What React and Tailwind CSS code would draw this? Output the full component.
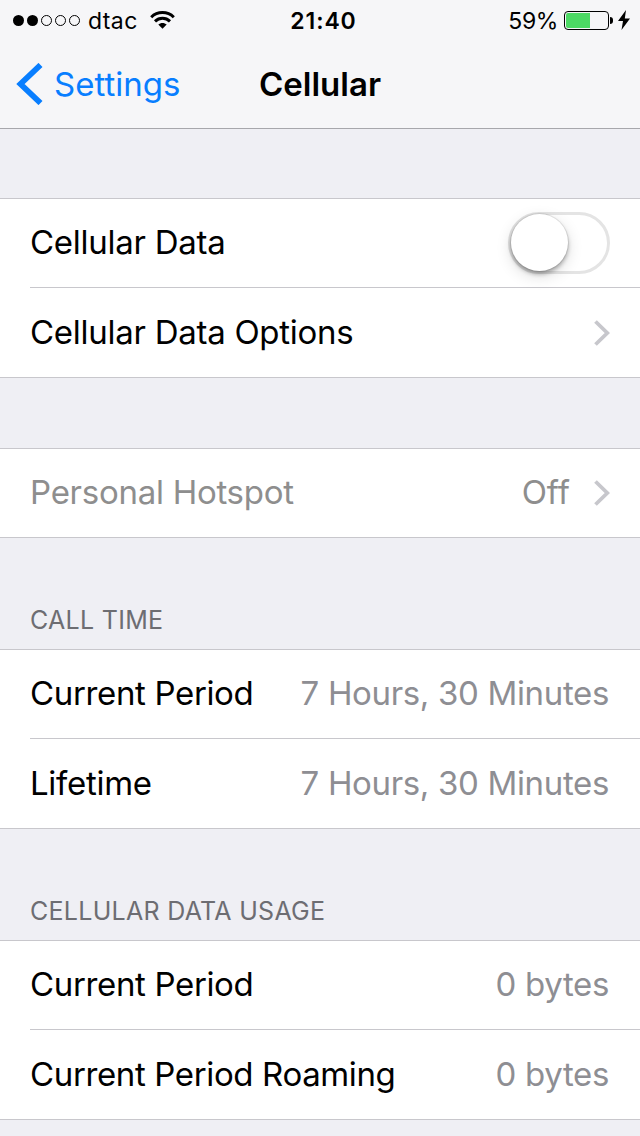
import React, { useState } from "react";

const groups = [
    {
        rows: [
            { label: 'Cellular Data', labelStyle: 'tracking-[-0.27px]', type: 'switch' },
            { label: 'Cellular Data Options', labelStyle: 'tracking-[-0.27px]', type: 'link' },
        ],
    },
    {
        rows: [
            { label: 'Personal Hotspot', labelStyle: 'tracking-[-0.27px]', value: 'Off', type: 'link', disabled: true },
        ],
    },
    {
        title: 'CALL TIME',
        rows: [
            { label: 'Current Period', labelStyle: 'tracking-[-0.35px]', value: '7 Hours, 30 Minutes' },
            { label: 'Lifetime', labelStyle: 'tracking-[-0.3px]', value: '7 Hours, 30 Minutes' },
        ],
    },
    {
        title: 'CELLULAR DATA USAGE',
        rows: [
            { label: 'Current Period', labelStyle: 'tracking-[-0.35px]', value: '0 bytes' },
            { label: 'Current Period Roaming', labelStyle: 'tracking-[-0.37px]', value: '0 bytes' },
        ],
    },
]

function StatusBar() {
    return (
        <div className="grid h-10 grid-cols-3 items-center pl-[13px] pr-2.5 pt-px text-[23px] leading-none">
            <div className="flex items-center">
                <div className="flex gap-[3px]">
                    {[1, 2, 3, 4, 5].map((dot) => (
                        <span key={dot} className={dot <= 2 ? "size-[11px] rounded-full bg-black" : "size-[11px] rounded-full border border-black"} />
                    ))}
                </div>
                <span className="ml-2 pt-0.5 tracking-[0.4px]">dtac</span>
                <svg className="mb-px ml-3 h-[18px] w-[25px]" viewBox="0 0 25 18" fill="none" stroke="black" strokeWidth="3">
                    <path d="M1.2 6.2C7.5 0 17.5 0 23.8 6.2" />
                    <path d="M5 10.3C9.3 6.2 15.7 6.2 20 10.3" />
                    <path d="M12.5 17.8L8.3 13.6C10.6 11.4 14.4 11.4 16.7 13.6Z" fill="black" stroke="none" />
                </svg>
            </div>
            <span className="pl-1 pt-0.5 text-center font-semibold tracking-[0.9px]">21:40</span>
            <div className="flex items-center justify-end">
                <span className="mr-1.5 pt-0.5 tracking-[-0.4px]">59%</span>
                <div className="h-[19px] w-[45px] rounded-[4px] border border-black p-px">
                    <div className="h-full w-6 rounded-l-[2px] bg-[#4cd964]" />
                </div>
                <div className="ml-px h-[7px] w-[3px] rounded-r-full bg-black" />
                <svg className="mb-0.5 ml-[5px] h-5 w-3" viewBox="0 0 12 20">
                    <path d="M8 0L0 11H5L3.5 20L12 8.5H6.8Z" fill="black" />
                </svg>
            </div>
        </div>
    )
}

function NavBar() {
    return (
        <div className="grid h-[88px] grid-cols-3 items-center px-4">
            <button className="flex items-center text-[#087eff]">
                <svg className="h-[42px] w-[27px]" viewBox="0 0 27 42" fill="none" stroke="currentColor" strokeWidth="5.8">
                    <path d="M24.5 2L4.5 21L24.5 40" />
                </svg>
                <span className="ml-[11px] text-[33px] leading-none">Settings</span>
            </button>
            <h1 className="text-center text-[33px] font-semibold leading-none">Cellular</h1>
        </div>
    )
}

function Switch() {
    const [on, setOn] = useState(false)
    return (
        <button
            role="switch"
            aria-checked={on}
            aria-label="Cellular Data"
            onClick={() => setOn(!on)}
            className={on
                ? "flex h-[62px] w-[102px] justify-end rounded-full border-3 border-[#4cd964] bg-[#4cd964]"
                : "flex h-[62px] w-[102px] rounded-full border-3 border-[#e4e4e4] bg-white"}
        >
            <span className="-mt-px size-[57px] rounded-full bg-white shadow-[0_0_0_1px_rgba(0,0,0,0.08),0_3px_4px_rgba(0,0,0,0.3),0_5px_16px_rgba(0,0,0,0.14)]" />
        </button>
    )
}

function Chevron() {
    return (
        <svg className="ml-6 h-[26px] w-4" viewBox="0 0 16 26" fill="none" stroke="#c7c7cc" strokeWidth="3.8">
            <path d="M1.5 1.5L13.3 13L1.5 24.5" />
        </svg>
    )
}

function Row({ row, divider, second }) {
    const textPad = second ? '' : 'pb-0.5'
    return (
        <div className={divider ? "flex h-[89px] items-center border-b border-[#c8c7cc] pr-[30px]" : "flex h-full items-center pr-[30px]"}>
            <span className={`flex-1 whitespace-nowrap text-[33px] leading-none ${textPad} ${row.labelStyle} ${row.disabled ? 'text-[#8e8e8e]' : 'text-black'}`}>{row.label}</span>
            {row.value && <span className={`whitespace-nowrap text-[33px] leading-none ${textPad} ${row.disabled ? 'text-[#8e8e8e]' : 'mr-px tracking-[-0.34px] text-[#8e8e93]'}`}>{row.value}</span>}
            {row.type === 'switch' && <Switch />}
            {row.type === 'link' && <Chevron />}
        </div>
    )
}

function Group({ group, first }) {
    return (
        <section>
            {group.title
                ? <h2 className="flex h-[111px] items-end pb-4 pl-[30px] text-[25px] leading-[26px] tracking-[0.28px] text-[#6d6d72]">{group.title}</h2>
                : <div className={first ? "h-[69px]" : "h-[70px]"} />}
            <div className={group.rows.length > 1
                ? "grid h-[180px] grid-rows-[89px_89px] border-y border-[#c8c7cc] bg-white pl-[30px]"
                : "h-[90px] border-y border-[#c8c7cc] bg-white pl-[30px]"}>
                {group.rows.map((row, i) => (
                    <Row key={row.label} row={row} divider={i < group.rows.length - 1} second={i > 0} />
                ))}
            </div>
        </section>
    )
}

function App() {
    return (
        <div className="h-[1136px] w-[640px] overflow-hidden bg-[#efeff4] font-['Inter',sans-serif] text-black">
            <header className="border-b border-[#a7a7ac] bg-[#f6f6f8]">
                <StatusBar />
                <NavBar />
            </header>
            <main>
                {groups.map((group, i) => (
                    <Group key={i} group={group} first={i === 0} />
                ))}
            </main>
        </div>
    );
}

export default App;
